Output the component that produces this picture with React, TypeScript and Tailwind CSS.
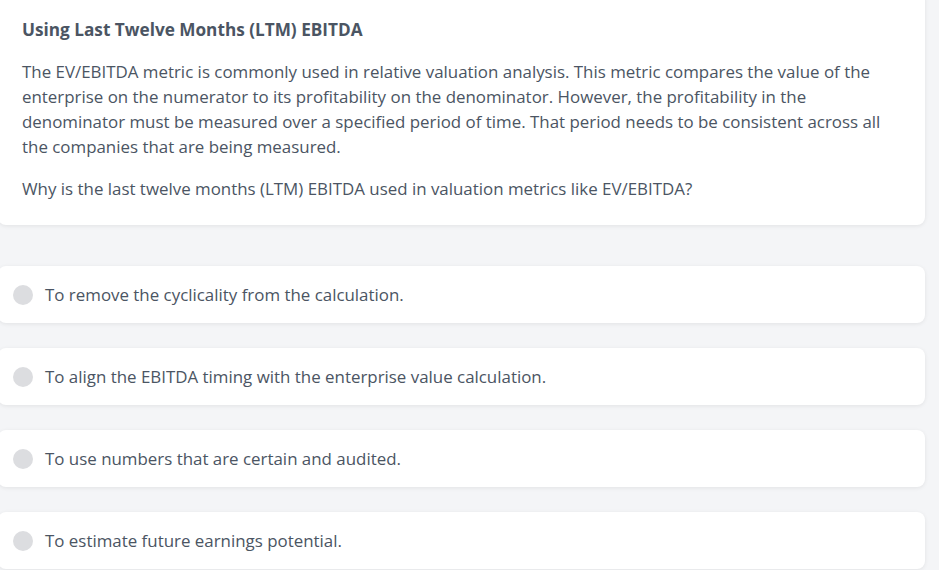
import React from "react";

const options = [
  "To remove the cyclicality from the calculation.",
  "To align the EBITDA timing with the enterprise value calculation.",
  "To use numbers that are certain and audited.",
  "To estimate future earnings potential.",
];

export default function App() {
  return (
    <div
      className="w-full h-[570px] overflow-hidden bg-[#f4f5f7] text-[#4b5563]"
      style={{ fontFamily: "'Open Sans', 'Noto Sans', sans-serif" }}
    >
      <div className="pr-[14px] -mt-[10px] -ml-[2px] flex flex-col">
        <div className="bg-white rounded-lg shadow-[0_1px_4px_rgba(0,0,0,0.08)] pl-[24px] pr-[24px] pt-[28px] pb-[24px]">
          <h2 className="text-[17.2px] leading-[24px] font-bold text-[#4b5563] mb-[17px] whitespace-nowrap">
            Using Last Twelve Months (LTM) EBITDA
          </h2>
          <p className="text-[16.9px] leading-[25px] mb-[17px] whitespace-nowrap">
            The EV/EBITDA metric is commonly used in relative valuation analysis. This metric compares the value of the
            <br />
            enterprise on the numerator to its profitability on the denominator. However, the profitability in the
            <br />
            denominator must be measured over a specified period of time. That period needs to be consistent across all
            <br />
            the companies that are being measured.
          </p>
          <p className="text-[16.9px] leading-[25px] whitespace-nowrap">
            Why is the last twelve months (LTM) EBITDA used in valuation metrics like EV/EBITDA?
          </p>
        </div>
        <div className="flex flex-col gap-[25px] mt-[41px]">
          {options.map((o) => (
            <div
              key={o}
              className="bg-white rounded-lg shadow-[0_1px_4px_rgba(0,0,0,0.08)] h-[57px] flex items-center pl-[15px] gap-[12px]"
            >
              <span className="w-[20px] h-[20px] rounded-full bg-[#dcdde0] shrink-0" />
              <span className="text-[16.9px]">{o}</span>
            </div>
          ))}
        </div>
      </div>
    </div>
  );
}
